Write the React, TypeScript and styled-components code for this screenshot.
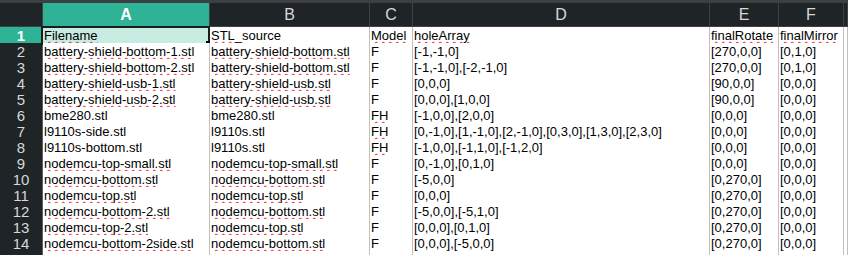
import React from 'react';
import styled, { createGlobalStyle } from 'styled-components';

const GlobalStyle = createGlobalStyle`
  html, body {
    margin: 0;
    padding: 0;
    background: #ffffff;
    overflow: hidden;
  }
`;

const COLS = '43px 167px 160px 43px 297px 69px 65px 1fr';

const Sheet = styled.div`
  width: 848px;
  height: 255px;
  overflow: hidden;
  border-top: 3px solid #3c4043;
  box-sizing: border-box;
  font-family: 'Liberation Sans', Arial, sans-serif;
`;

const Row = styled.div<{ $header?: boolean }>`
  display: grid;
  grid-template-columns: ${COLS};
  height: ${(p) => (p.$header ? '24px' : '16px')};
`;

const ColHead = styled.div<{ $active?: boolean }>`
  box-sizing: border-box;
  background: ${(p) => (p.$active ? '#2eb396' : '#1f2427')};
  color: ${(p) => (p.$active ? '#ffffff' : '#d6d8d9')};
  font-weight: ${(p) => (p.$active ? 'bold' : 'normal')};
  font-size: 16px;
  border-right: 1px solid #3d4245;
  border-bottom: 1px solid #3d4245;
  display: flex;
  align-items: center;
  justify-content: center;
  padding-top: 1px;
`;

const RowHead = styled.div<{ $active?: boolean }>`
  box-sizing: border-box;
  background: ${(p) => (p.$active ? '#2eb396' : '#1f2427')};
  color: ${(p) => (p.$active ? '#ffffff' : '#d6d8d9')};
  font-weight: ${(p) => (p.$active ? 'bold' : 'normal')};
  font-size: 15px;
  line-height: 16px;
  border-right: 1px solid #5a5f62;
  border-bottom: 1px solid #5a5f62;
  text-align: center;
  padding-top: 1px;
`;

const Cell = styled.div<{ $selected?: boolean }>`
  position: relative;
  box-sizing: border-box;
  background: ${(p) => (p.$selected ? '#c8ebe2' : '#ffffff')};
  color: #000000;
  font-size: 13px;
  line-height: 15px;
  padding: 1px 0 0 1px;
  border-right: 1px solid #c0c0c0;
  border-bottom: 1px solid #c0c0c0;
  white-space: nowrap;
  overflow: visible;
`;

const Cursor = styled.div`
  position: absolute;
  left: -2px;
  top: -1px;
  right: -1px;
  bottom: -1px;
  border: 2px solid #1c1c1c;
  pointer-events: none;
`;

const FillHandle = styled.div`
  position: absolute;
  right: -4px;
  bottom: -4px;
  width: 6px;
  height: 6px;
  background: #000000;
`;

const Typo = styled.span`
  text-decoration: underline wavy #e41b1b;
  text-decoration-thickness: 1.4px;
  text-decoration-skip-ink: none;
  text-underline-offset: 1px;
`;

type Value = string | { typo: string; rest?: string };

const t = (s: string): Value => ({ typo: s });

const rows: Value[][] = [
  [t('Filename'), { typo: 'STL', rest: '_source' }, t('Model'), t('holeArray'), t('finalRotate'), t('finalMirror')],
  [t('battery-shield-bottom-1.stl'), t('battery-shield-bottom.stl'), 'F', '[-1,-1,0]', '[270,0,0]', '[0,1,0]'],
  [t('battery-shield-bottom-2.stl'), t('battery-shield-bottom.stl'), 'F', '[-1,-1,0],[-2,-1,0]', '[270,0,0]', '[0,1,0]'],
  [t('battery-shield-usb-1.stl'), t('battery-shield-usb.stl'), 'F', '[0,0,0]', '[90,0,0]', '[0,0,0]'],
  [t('battery-shield-usb-2.stl'), t('battery-shield-usb.stl'), 'F', '[0,0,0],[1,0,0]', '[90,0,0]', '[0,0,0]'],
  ['bme280.stl', 'bme280.stl', t('FH'), '[-1,0,0],[2,0,0]', '[0,0,0]', '[0,0,0]'],
  ['l9110s-side.stl', 'l9110s.stl', t('FH'), '[0,-1,0],[1,-1,0],[2,-1,0],[0,3,0],[1,3,0],[2,3,0]', '[0,0,0]', '[0,0,0]'],
  ['l9110s-bottom.stl', 'l9110s.stl', t('FH'), '[-1,0,0],[-1,1,0],[-1,2,0]', '[0,0,0]', '[0,0,0]'],
  [t('nodemcu-top-small.stl'), t('nodemcu-top-small.stl'), 'F', '[0,-1,0],[0,1,0]', '[0,0,0]', '[0,0,0]'],
  [t('nodemcu-bottom.stl'), t('nodemcu-bottom.stl'), 'F', '[-5,0,0]', '[0,270,0]', '[0,0,0]'],
  [t('nodemcu-top.stl'), t('nodemcu-top.stl'), 'F', '[0,0,0]', '[0,270,0]', '[0,0,0]'],
  [t('nodemcu-bottom-2.stl'), t('nodemcu-bottom.stl'), 'F', '[-5,0,0],[-5,1,0]', '[0,270,0]', '[0,0,0]'],
  [t('nodemcu-top-2.stl'), t('nodemcu-top.stl'), 'F', '[0,0,0],[0,1,0]', '[0,270,0]', '[0,0,0]'],
  [t('nodemcu-bottom-2side.stl'), t('nodemcu-bottom.stl'), 'F', '[0,0,0],[-5,0,0]', '[0,270,0]', '[0,0,0]'],
  [t('nodemcu-top-2side-2.stl'), t('nodemcu-top.stl'), 'F', '[0,0,0],[0,1,0],[-5,0,0],[-5,1,0]', '[0,270,0]', '[0,0,0]'],
];

const letters = ['A', 'B', 'C', 'D', 'E', 'F', ''];

const Content: React.FC<{ value: Value }> = ({ value }) => {
  if (typeof value === 'string') return <>{value}</>;
  return (
    <>
      <Typo>{value.typo}</Typo>
      {value.rest}
    </>
  );
};

export default function App() {
  return (
    <>
      <GlobalStyle />
      <Sheet>
        <Row $header>
          <ColHead />
          {letters.map((l, i) => (
            <ColHead key={i} $active={i === 0}>
              {l}
            </ColHead>
          ))}
        </Row>
        {rows.map((r, ri) => (
          <Row key={ri}>
            <RowHead $active={ri === 0}>{ri + 1}</RowHead>
            {r.map((v, ci) => (
              <Cell key={ci} $selected={ri === 0 && ci === 0}>
                <Content value={v} />
                {ri === 0 && ci === 0 && (
                  <Cursor>
                    <FillHandle />
                  </Cursor>
                )}
              </Cell>
            ))}
            <Cell />
          </Row>
        ))}
      </Sheet>
    </>
  );
}
